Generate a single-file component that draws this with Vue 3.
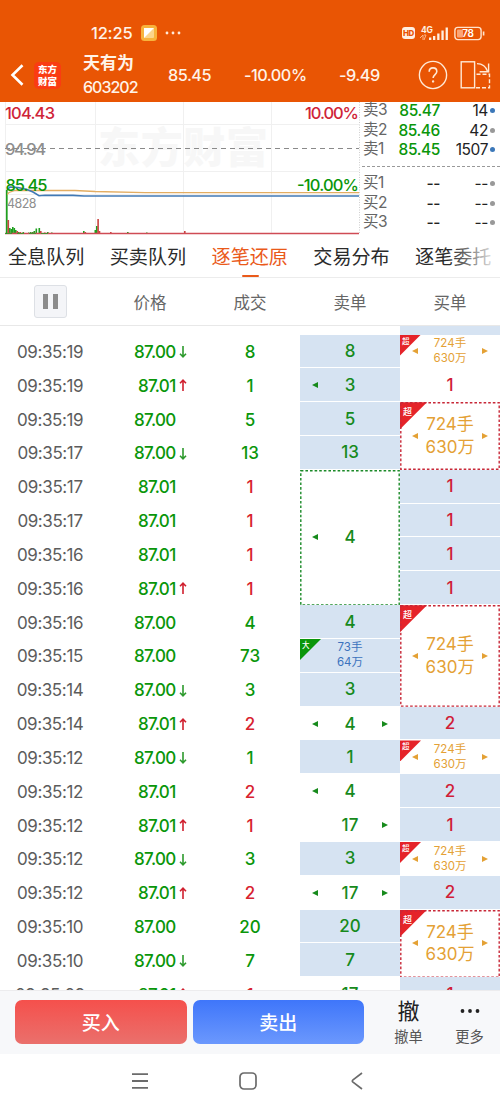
<script setup>
import { ref } from 'vue';

const tabs = ['全息队列', '买卖队列', '逐笔还原', '交易分布', '逐笔委托'];
const activeTab = ref('逐笔还原');

const asks = [
  { label: '卖3', price: '85.47', volume: '14', dot: 'blue' },
  { label: '卖2', price: '85.46', volume: '42', dot: 'gray' },
  { label: '卖1', price: '85.45', volume: '1507', dot: 'blue' },
];
const bids = [
  { label: '买1', price: '--', volume: '--', dot: 'gray' },
  { label: '买2', price: '--', volume: '--', dot: 'gray' },
  { label: '买3', price: '--', volume: '--', dot: 'gray' },
];

const trades = [
  { time: '09:35:19', price: '87.00', dir: 'down', count: 8, side: 'sell' },
  { time: '09:35:19', price: '87.01', dir: 'up', count: 1, side: 'sell' },
  { time: '09:35:19', price: '87.00', dir: '', count: 5, side: 'sell' },
  { time: '09:35:17', price: '87.00', dir: 'down', count: 13, side: 'sell' },
  { time: '09:35:17', price: '87.01', dir: '', count: 1, side: 'buy' },
  { time: '09:35:17', price: '87.01', dir: '', count: 1, side: 'buy' },
  { time: '09:35:16', price: '87.01', dir: '', count: 1, side: 'buy' },
  { time: '09:35:16', price: '87.01', dir: 'up', count: 1, side: 'buy' },
  { time: '09:35:16', price: '87.00', dir: '', count: 4, side: 'sell' },
  { time: '09:35:15', price: '87.00', dir: '', count: 73, side: 'sell' },
  { time: '09:35:14', price: '87.00', dir: 'down', count: 3, side: 'sell' },
  { time: '09:35:14', price: '87.01', dir: 'up', count: 2, side: 'buy' },
  { time: '09:35:12', price: '87.00', dir: 'down', count: 1, side: 'sell' },
  { time: '09:35:12', price: '87.01', dir: '', count: 2, side: 'buy' },
  { time: '09:35:12', price: '87.01', dir: 'up', count: 1, side: 'buy' },
  { time: '09:35:12', price: '87.00', dir: 'down', count: 3, side: 'sell' },
  { time: '09:35:12', price: '87.01', dir: 'up', count: 2, side: 'buy' },
  { time: '09:35:10', price: '87.00', dir: '', count: 20, side: 'sell' },
  { time: '09:35:10', price: '87.00', dir: 'down', count: 7, side: 'sell' },
  { time: '09:35:09', price: '87.01', dir: 'up', count: 1, side: 'buy' },
];

// span - how many trades the order covers
const sellOrders = [
  { text: '8', fill: true },
  { text: '3', fill: true, left: true },
  { text: '5', fill: true },
  { text: '13', fill: true },
  { text: '4', span: 4, left: true },
  { text: '4', fill: true },
  { text: '73手', sub: '64万', fill: true, tag: '大' },
  { text: '3', fill: true },
  { text: '4', left: true, right: true },
  { text: '1', fill: true },
  { text: '4', left: true },
  { text: '17', right: true },
  { text: '3', fill: true },
  { text: '17', left: true, right: true },
  { text: '20', fill: true },
  { text: '7', fill: true },
  { text: '17' },
];

const big = (span = 1) => ({ text: '724手', sub: '630万', tag: '超', left: true, right: true, span });
const buyOrders = [
  big(),
  { text: '1' },
  big(2),
  { text: '1', fill: true },
  { text: '1', fill: true },
  { text: '1', fill: true },
  { text: '1', fill: true },
  big(3),
  { text: '2', fill: true },
  big(),
  { text: '2', fill: true },
  { text: '1', fill: true },
  big(),
  { text: '2', fill: true },
  big(2),
  { text: '1', fill: true },
];

const orderColumns = [
  { name: 'sell', orders: sellOrders },
  { name: 'buy', orders: buyOrders },
];

const rowHeight = 33.84;

// volume bars: x, height, color
const bars = [
  [6, 44, 'g'], [7.5, 14, 'r'], [9, 6, 'g'], [10.5, 5, 'g'], [12, 7, 'g'], [13.5, 6, 'g'],
  [15, 4, 'g'], [16.5, 3, 'r'], [18, 2, 'g'], [19.5, 2, 'r'], [22.5, 2, 'g'], [25, 1, 'r'],
  [28, 1.5, 'g'], [30, 2, 'g'], [32, 2, 'g'], [33.5, 3, 'g'], [35.5, 5.5, 'g'], [38.5, 6, 'g'],
  [40, 3, 'r'], [44, 1.5, 'r'], [47, 2, 'g'], [51, 1.5, 'g'], [83, 3, 'g'], [84.5, 2, 'r'],
  [94.5, 4, 'g'], [96, 8, 'g'], [97.3, 15, 'r'], [98.7, 3, 'r'], [110, 2, 'r'], [127, 2, 'g'],
  [146, 1.5, 'g'], [184, 3, 'r'],
];
</script>

<template>
  <div class="screen">
    <header class="header">
      <div class="status-bar">
        <span class="clock">12:25</span>
        <svg class="app-badge" width="16" height="16" viewBox="0 0 16 16">
          <rect width="16" height="16" rx="3.5" fill="#f8b33c" />
          <rect x="3" y="3" width="10" height="10" rx="1" fill="#fbd58c" />
          <path d="M3 3h10L3 13z" fill="#fff" />
        </svg>
        <svg class="status-dots" width="16" height="4" viewBox="0 0 16 4" fill="#ffe9d8">
          <circle cx="2" cy="2" r="1.4" />
          <circle cx="8" cy="2" r="1.4" />
          <circle cx="14" cy="2" r="1.4" />
        </svg>
        <span class="hd">HD</span>
        <svg class="signal" width="30" height="17" viewBox="0 0 30 17" fill="#fff0e2">
          <text x="1" y="7.5" font-size="8.5" font-weight="700" textLength="12">4G</text>
          <path d="M0 13l3-3v5M4 10h2l-2 5" fill="none" stroke="#fbb58a" stroke-width="1" />
          <rect x="9" y="12.5" width="2.3" height="2.5" />
          <rect x="13" y="11" width="2.3" height="4" />
          <rect x="17.2" y="8.5" width="2.3" height="6.5" />
          <rect x="21.4" y="5.5" width="2.3" height="9.5" />
          <rect x="25.6" y="2.5" width="2.3" height="12.5" />
        </svg>
        <svg class="battery" width="31" height="15" viewBox="0 0 31 15">
          <rect x="0.9" y="1.4" width="26.2" height="12.2" rx="3" fill="none" stroke="#ffe3cd" stroke-width="1.4" />
          <rect x="3" y="3.5" width="6" height="8" rx="1" fill="#fba575" />
          <rect x="28.8" y="5.5" width="1.6" height="4" fill="#ffe3cd" />
          <text x="8.3" y="11.2" font-size="10" font-weight="600" fill="#fff" textLength="11.5">78</text>
        </svg>
      </div>
      <div class="title-bar">
        <svg class="back" width="15" height="24" viewBox="0 0 15 24">
          <path d="M12.5 2.2L2.5 12l10 9.8" fill="none" stroke="#fff" stroke-width="2.6" />
        </svg>
        <div class="logo"><span>东方</span><span>财富</span></div>
        <div class="stock">
          <span class="stock-name">天有为</span>
          <span class="stock-code">603202</span>
        </div>
        <span class="quote last">85.45</span>
        <span class="quote percent">-10.00%</span>
        <span class="quote change">-9.49</span>
        <svg class="help" width="30" height="30" viewBox="0 0 30 30" fill="none" stroke="#ffe9d6" stroke-width="1.4">
          <circle cx="15" cy="15" r="13.6" />
          <path d="M11.2 11.7c0-2.4 1.6-3.8 3.8-3.8s3.8 1.4 3.8 3.6c0 3-3.7 3.3-3.7 6.600" stroke-width="1.6" />
          <circle cx="15.1" cy="21.4" r="0.5" />
        </svg>
        <svg class="rotate" width="31" height="30" viewBox="0 0 31 30" fill="none" stroke="#ffe9d6" stroke-width="1.4">
          <rect x="1.2" y="1.8" width="13.4" height="26" />
          <path d="M17 3.6c5.5 0 9 2.6 10.6 8M28.6 3.5v8.3h-9" />
          <path d="M16.5 14.3h13v13.5h-15" stroke-dasharray="4 2" />
        </svg>
      </div>
    </header>

    <section class="overview">
      <svg class="chart" width="360" height="134" viewBox="0 0 360 134">
        <g stroke="#f0f0f0" stroke-width="1">
          <path d="M5.5 0v132M95.5 0v132M183.5 0v132M271.5 0v132" />
          <path d="M5 22.5h354M5 69.5h354M5 92.5h354" />
        </g>
        <path d="M359.5 0v132" stroke="#cfcfcf" stroke-dasharray="1 1.5" />
        <text class="watermark" x="98" y="61" textLength="170">东方财富</text>
        <path d="M5 46.5h354" stroke="#8a8a8a" stroke-dasharray="5 4" />
        <rect
          v-for="([x, h, c], i) in bars"
          :key="i"
          :x="x"
          :y="132 - h"
          width="1.6"
          :height="h"
          :fill="c === 'g' ? '#1f9f1f' : '#c9433f'"
        />
        <path d="M5 131.5h354" stroke="#cf4b55" stroke-width="1.4" />
        <path d="M5 131.5h48" stroke="#4c8a33" stroke-width="1.2" stroke-dasharray="7 5" />
        <path d="M6.5 93L9 90.5l6-2h60l20 1 50 1.2h214" fill="none" stroke="#e3ad62" stroke-width="1.3" />
        <path d="M6.5 132V88" stroke="#1f9f1f" stroke-width="1.2" />
        <path d="M7 88l3-3 8 .5 9 2 6 2.5 6 3.8 6-.6 28 .2 11 .6h275" fill="none" stroke="#4179b5" stroke-width="1.6" />
        <g font-size="16.5" font-weight="500">
          <text x="5" y="17" fill="#cf2438" textLength="50">104.43</text>
          <text x="305" y="17" fill="#cf2438" textLength="54">10.00%</text>
          <text x="5" y="52.5" fill="#8e8e8e" textLength="41">94.94</text>
          <text x="5.5" y="88.5" fill="#0a960a" textLength="42">85.45</text>
          <text x="297" y="88.5" fill="#0a960a" textLength="62">-10.00%</text>
        </g>
        <text x="7" y="106" font-size="12.5" fill="#8e8e8e" textLength="29.5">4828</text>
      </svg>
      <div class="depth">
        <div v-for="row in asks" :key="row.label" class="depth-row">
          <span class="depth-label">{{ row.label }}</span>
          <span class="depth-price green">{{ row.price }}</span>
          <span class="depth-volume">{{ row.volume }}</span>
          <i class="dot" :class="row.dot"></i>
        </div>
        <div class="depth-divider"></div>
        <div v-for="row in bids" :key="row.label" class="depth-row">
          <span class="depth-label">{{ row.label }}</span>
          <span class="depth-price">{{ row.price }}</span>
          <span class="depth-volume">{{ row.volume }}</span>
          <i class="dot" :class="row.dot"></i>
        </div>
      </div>
    </section>

    <nav class="tabs">
      <button
        v-for="tab in tabs"
        :key="tab"
        class="tab"
        :class="{ active: tab === activeTab }"
        @click="activeTab = tab"
      >
        {{ tab }}
      </button>
    </nav>

    <div class="table-head">
      <div class="head-cell">
        <button class="pause"><i></i><i></i></button>
      </div>
      <div class="head-cell">价格</div>
      <div class="head-cell">成交</div>
      <div class="head-cell">卖单</div>
      <div class="head-cell">买单</div>
    </div>

    <main class="table">
      <div class="trades">
        <div v-for="(trade, i) in trades" :key="i" class="trade">
          <span class="time">{{ trade.time }}</span>
          <span class="price">{{ trade.price }}</span>
          <span class="arrow">
            <svg v-if="trade.dir" :class="trade.dir" width="8" height="13" viewBox="0 0 8 13">
              <path d="M4 1v11M1 8.8l3 3 3-3" fill="none" stroke="currentColor" stroke-width="1.6" />
            </svg>
          </span>
          <span class="count" :class="trade.side">{{ trade.count }}</span>
        </div>
      </div>
      <div v-for="col in orderColumns" :key="col.name" class="orders" :class="col.name">
        <div class="order-rest"></div>
        <div
          v-for="(order, i) in col.orders"
          :key="i"
          class="order"
          :class="{ fill: order.fill, merged: order.span > 1, double: order.sub }"
          :style="{ height: (order.span || 1) * rowHeight + 'px' }"
        >
          <span v-if="order.tag" class="tag"><b>{{ order.tag }}</b></span>
          <svg v-if="order.span > 1" class="frame" width="100" :height="order.span * rowHeight">
            <rect x="0.8" y="0.8" width="98.4" :height="order.span * rowHeight - 1.2" />
          </svg>
          <i class="tri" :class="{ left: order.left }"></i>
          <span class="order-text">
            <span>{{ order.text }}</span>
            <span v-if="order.sub">{{ order.sub }}</span>
          </span>
          <i class="tri" :class="{ right: order.right }"></i>
        </div>
      </div>
    </main>

    <footer class="actions">
      <button class="trade-btn buy-btn">买入</button>
      <button class="trade-btn sell-btn">卖出</button>
      <div class="action">
        <span class="action-icon">撤</span>
        <span>撤单</span>
      </div>
      <div class="action">
        <span class="action-icon">
          <svg width="20" height="4" viewBox="0 0 20 4" fill="#222">
            <circle cx="2.5" cy="2" r="1.9" />
            <circle cx="10" cy="2" r="1.9" />
            <circle cx="17.5" cy="2" r="1.9" />
          </svg>
        </span>
        <span>更多</span>
      </div>
    </footer>

    <div class="system-nav">
      <svg width="18" height="18" viewBox="0 0 18 18" fill="none" stroke="#6b6b6b" stroke-width="1.8">
        <path d="M1 2.2h16M1 9h16M1 15.8h16" />
      </svg>
      <svg width="18" height="18" viewBox="0 0 18 18" fill="none" stroke="#6b6b6b" stroke-width="1.7">
        <rect x="1" y="1" width="16" height="16" rx="4" />
      </svg>
      <svg width="12" height="18" viewBox="0 0 12 18" fill="none" stroke="#6b6b6b" stroke-width="1.7">
        <path d="M11 1L2 7.8q-1.4 1.2 0 2.4L11 17" />
      </svg>
    </div>
  </div>
</template>

<style>
body {
  background: #fff;
}
</style>

<style scoped>
.screen {
  display: flex;
  flex-direction: column;
  width: 500px;
  height: 1111px;
  overflow: hidden;
  background: #fff;
  font-family: Inter, 'Noto Sans CJK SC', sans-serif;
  color: #333;
}

button {
  padding: 0;
  border: none;
  background: none;
  font: inherit;
  color: inherit;
}

i {
  font-style: normal;
}

.header {
  flex: none;
  box-sizing: border-box;
  height: 102px;
  padding-top: 22px;
  background: #e95504;
  color: #fff3e8;
}

.status-bar {
  display: flex;
  align-items: center;
  height: 22px;
  padding-left: 91px;
}

.clock {
  width: 50px;
  font-size: 16.5px;
  font-weight: 500;
  letter-spacing: -0.2px;
}

.status-dots {
  margin-left: 8px;
}

.hd {
  width: 13px;
  margin-left: 221px;
  border-radius: 3px;
  background: #fff0e2;
  color: #e95504;
  font-size: 8px;
  font-weight: 800;
  line-height: 12px;
  text-align: center;
  letter-spacing: -0.3px;
}

.signal {
  margin-left: 5px;
}

.battery {
  margin-left: 4px;
}

.title-bar {
  display: flex;
  align-items: center;
  height: 58px;
  margin-top: 2px;
  padding-left: 10px;
}

.logo {
  display: flex;
  flex-direction: column;
  justify-content: center;
  align-items: center;
  width: 27px;
  height: 27px;
  margin-left: 9px;
  border-radius: 5px;
  background: #fa3c12;
  color: #fff;
  font-family: 'Noto Sans CJK SC', sans-serif;
  font-size: 9.5px;
  font-weight: 900;
  line-height: 12px;
}

.stock {
  display: flex;
  flex-direction: column;
  width: 85px;
  margin-left: 22px;
}

.stock-name {
  font-size: 17px;
  font-weight: 600;
  line-height: 24px;
}

.stock-code {
  margin-top: 1px;
  font-size: 16px;
  font-weight: 500;
  line-height: 23px;
  letter-spacing: -1px;
}

.quote {
  font-size: 16.3px;
  font-weight: 500;
  letter-spacing: -0.5px;
}

.last {
  width: 76px;
}

.percent {
  width: 95px;
}

.change {
  width: 79px;
}

.rotate {
  margin-left: 12px;
}

.overview {
  display: flex;
  flex: none;
  height: 134px;
}

.chart {
  flex: none;
}

.watermark {
  font-family: 'Noto Sans CJK SC', sans-serif;
  font-size: 42px;
  font-weight: 900;
  fill: #f7f7f7;
}

.depth {
  flex: 1;
  margin-top: -1px;
}

.depth-row {
  display: flex;
  align-items: center;
  height: 19.4px;
  padding: 0 5px 0 3px;
  font-size: 15.5px;
  line-height: 19px;
  letter-spacing: -0.4px;
  color: #222;
}

.depth-label {
  width: 30px;
  height: 21px;
  color: #666;
}

.depth-price {
  width: 47px;
  font-weight: 500;
  text-align: right;
}

.depth-volume {
  width: 48px;
  text-align: right;
}

.depth-divider {
  height: 0;
  margin: 7px 0 7px 2px;
  border-top: 1px dashed #999;
}

.dot {
  width: 5px;
  height: 5px;
  margin-left: 2px;
  border-radius: 50%;
  background: #999;
}

.dot.blue {
  background: #3c78b9;
}

.green {
  color: #0a960a;
}

.tabs {
  position: relative;
  display: flex;
  flex: none;
  gap: 25.4px;
  height: 41px;
  padding-left: 8px;
  border-bottom: 1px solid #ececec;
  overflow: hidden;
}

.tabs::after {
  content: '';
  position: absolute;
  top: 0;
  right: 0;
  width: 50px;
  height: 40px;
  background: linear-gradient(to right, rgba(255, 255, 255, 0), #fff);
}

.tab {
  position: relative;
  flex: none;
  padding-bottom: 2px;
  font-size: 19.1px;
  color: #2b2b2b;
}

.tab.active {
  color: #ea5a1a;
}

.tab.active::after {
  content: '';
  position: absolute;
  left: 50%;
  bottom: 0;
  width: 17px;
  height: 2px;
  margin-left: -8px;
  border-radius: 1px;
  background: #ea5a1a;
}

.table-head {
  display: flex;
  flex: none;
  height: 47px;
  border-bottom: 1px solid #e8e8e8;
}

.head-cell {
  display: flex;
  align-items: center;
  justify-content: center;
  width: 100px;
  font-size: 16.5px;
  color: #666;
}

.pause {
  display: flex;
  align-items: center;
  justify-content: center;
  gap: 5px;
  box-sizing: border-box;
  width: 33px;
  height: 33px;
  border: 1px solid #dde0e5;
  border-radius: 3px;
  background: #f4f5f8;
}

.pause i {
  width: 5px;
  height: 15px;
  background: #8c8c8c;
}

.table {
  display: flex;
  flex: none;
  height: 664px;
  overflow: hidden;
}

.trades {
  width: 300px;
  padding-top: 9px;
}

.trade {
  display: flex;
  align-items: center;
  height: 33.84px;
  font-size: 17px;
}

.time {
  width: 100px;
  text-align: center;
  letter-spacing: -0.4px;
  color: #5c5c5c;
}

.price {
  width: 75.5px;
  text-align: right;
  font-weight: 500;
  letter-spacing: -0.7px;
  color: #0a960a;
}

.arrow {
  display: flex;
  width: 24.5px;
  padding-left: 3px;
  box-sizing: border-box;
}

.arrow .down {
  color: #2d9a2d;
}

.arrow .up {
  color: #d0202f;
  transform: rotate(180deg);
}

.count {
  width: 100px;
  text-align: center;
  font-weight: 500;
}

.count.sell {
  color: #0a960a;
}

.count.buy {
  color: #d8232f;
}

.orders {
  width: 100px;
}

.order-rest {
  height: 8.5px;
}

.buy .order-rest {
  background: #d6e3f2;
}

.order {
  position: relative;
  display: flex;
  align-items: center;
  justify-content: center;
  box-sizing: border-box;
  font-size: 17px;
  font-weight: 500;
}

.order.fill {
  border-bottom: 1px solid #fff;
  background: #d6e3f2;
}

.sell .order {
  color: #178a1c;
}

.buy .order {
  color: #d01e38;
}

.frame {
  position: absolute;
  left: 0;
  top: 0;
  fill: none;
  stroke: #1b8a28;
  stroke-width: 1.4;
  stroke-dasharray: 2.6 2;
}

.buy .frame {
  stroke: #c82838;
}

.order-text {
  display: flex;
  flex-direction: column;
  align-items: center;
  width: 64px;
}

.order.double {
  font-size: 11.5px;
  font-weight: 400;
  line-height: 15px;
}

.sell .order.double {
  color: #3b72bd;
}

.buy .order.double {
  color: #e4a135;
}

.order.double.merged {
  font-size: 17px;
  line-height: 22.5px;
}

.tri {
  width: 6px;
  height: 0;
  border: 3.6px solid transparent;
  border-left-width: 0;
  border-right-width: 0;
}

.tri.left {
  width: 0;
  border-right: 6px solid currentColor;
}

.tri.right {
  width: 0;
  border-left: 6px solid currentColor;
}

.tag {
  position: absolute;
  left: 0;
  top: 0;
  width: 21px;
  height: 21px;
  background: #e52329;
  clip-path: polygon(0 0, 100% 0, 0 100%);
  color: #fff;
  line-height: 14px;
}

.tag b {
  display: block;
  padding-left: 2px;
  font-size: 7.5px;
  font-weight: 500;
}

.sell .tag {
  background: #0a960a;
}

.merged .tag {
  width: 27px;
  height: 27px;
  line-height: 19px;
}

.merged .tag b {
  padding-left: 3px;
  font-size: 9px;
}

.actions {
  display: flex;
  flex: none;
  align-items: center;
  box-sizing: border-box;
  height: 64px;
  padding: 0 0 1px 15px;
  border-top: 1px solid #ececee;
  background: #f7f8fa;
}

.trade-btn {
  width: 171.5px;
  height: 44px;
  padding-bottom: 2px;
  margin-right: 6px;
  border-radius: 7px;
  color: #fff;
  font-size: 19px;
  font-weight: 500;
}

.buy-btn {
  background: linear-gradient(#f5504c, #ea706c);
}

.sell-btn {
  margin-right: 14px;
  background: linear-gradient(#3f76fa, #6b98fd);
}

.action {
  display: flex;
  flex-direction: column;
  align-items: center;
  width: 61px;
  margin-top: -2px;
  font-size: 14.3px;
  line-height: 20px;
  color: #555;
}

.action-icon {
  display: flex;
  align-items: center;
  height: 31px;
  font-size: 22px;
  color: #222;
}

.system-nav {
  display: flex;
  flex: 1;
  align-items: flex-start;
  padding: 18px 0 0 131px;
}

.system-nav svg + svg {
  margin-left: 90px;
}

.system-nav svg:last-child {
  margin-left: 94px;
}
</style>
